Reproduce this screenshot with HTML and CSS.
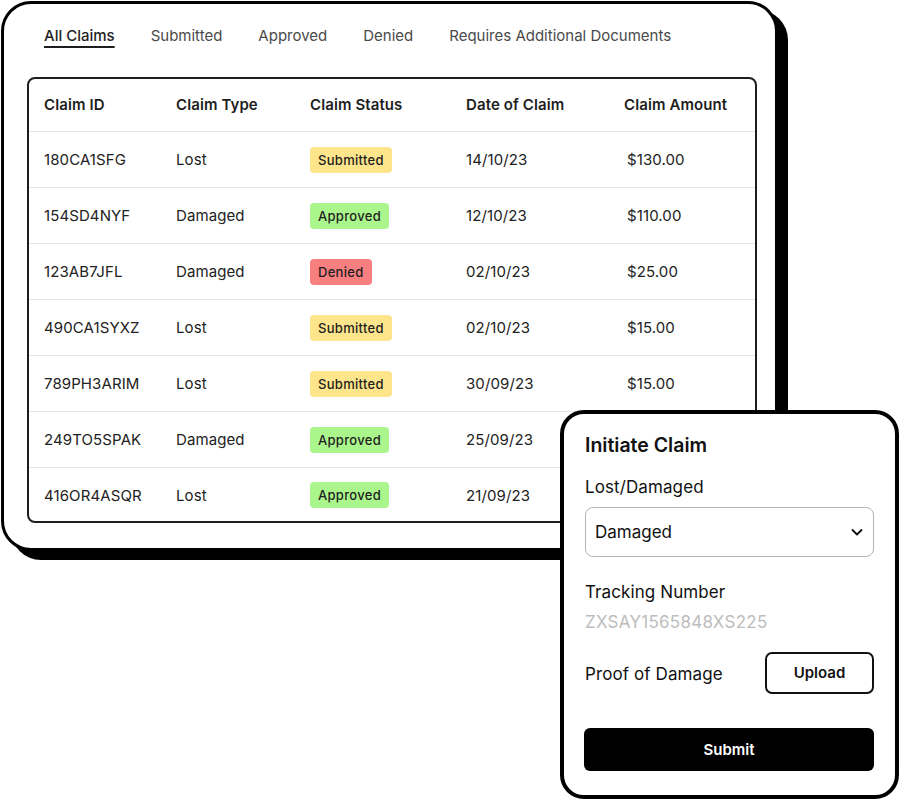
FILE: index.html
```html
<!DOCTYPE html>
<html>
<head>
<meta charset="utf-8">
<link rel="stylesheet" href="styles.css">
</head>
<body>
<div class="page">
  <section class="card">
    <nav class="tabs">
      <span class="tab active">All Claims</span>
      <span class="tab">Submitted</span>
      <span class="tab">Approved</span>
      <span class="tab">Denied</span>
      <span class="tab">Requires Additional Documents</span>
    </nav>
    <div class="table">
      <div class="row head">
        <div>Claim ID</div><div>Claim Type</div><div>Claim Status</div><div>Date of Claim</div><div>Claim Amount</div>
      </div>
      <div class="row">
        <div>180CA1SFG</div><div>Lost</div><div><span class="badge sub">Submitted</span></div><div>14/10/23</div><div class="amt">$130.00</div>
      </div>
      <div class="row">
        <div>154SD4NYF</div><div>Damaged</div><div><span class="badge ok">Approved</span></div><div>12/10/23</div><div class="amt">$110.00</div>
      </div>
      <div class="row">
        <div>123AB7JFL</div><div>Damaged</div><div><span class="badge no">Denied</span></div><div>02/10/23</div><div class="amt">$25.00</div>
      </div>
      <div class="row">
        <div>490CA1SYXZ</div><div>Lost</div><div><span class="badge sub">Submitted</span></div><div>02/10/23</div><div class="amt">$15.00</div>
      </div>
      <div class="row">
        <div>789PH3ARIM</div><div>Lost</div><div><span class="badge sub">Submitted</span></div><div>30/09/23</div><div class="amt">$15.00</div>
      </div>
      <div class="row">
        <div>249TO5SPAK</div><div>Damaged</div><div><span class="badge ok">Approved</span></div><div>25/09/23</div><div class="amt">$15.00</div>
      </div>
      <div class="row last">
        <div>416OR4ASQR</div><div>Lost</div><div><span class="badge ok">Approved</span></div><div>21/09/23</div><div class="amt">$15.00</div>
      </div>
    </div>
  </section>

  <section class="modal">
    <h2 class="m-title">Initiate Claim</h2>
    <div class="m-label">Lost/Damaged</div>
    <div class="select">
      <span>Damaged</span>
      <svg width="14" height="14" viewBox="0 0 14 14"><path d="M2.5 5 L7 9.5 L11.5 5" fill="none" stroke="#111" stroke-width="1.8" stroke-linecap="round" stroke-linejoin="round"/></svg>
    </div>
    <div class="m-label track-label">Tracking Number</div>
    <div class="track-val">ZXSAY1565848XS225</div>
    <div class="proof">
      <span class="m-label">Proof of Damage</span>
      <span class="upload">Upload</span>
    </div>
    <div class="submit">Submit</div>
  </section>
</div>
</body>
</html>
```
FILE: styles.css
```css
* { box-sizing: border-box; }
html, body { margin: 0; padding: 0; background: #fff; }
body { font-family: Inter, "Noto Sans", sans-serif; color: #1e1e1e; }
.page { position: relative; width: 900px; height: 800px; padding: 1px 0 0 1px; }

.card {
  width: 777px;
  height: 550px;
  border: 3px solid #000;
  border-radius: 30px;
  box-shadow: 10px 9px 0 #000;
  background: #fff;
  padding: 22px 20px 0 23px;
}
.tabs { display: flex; gap: 36px; padding-left: 17px; height: 20px; align-items: center; }
.tab { font-size: 15px; color: #4a4a4a; line-height: 20px; white-space: nowrap; }
.tab.active { color: #1e1e1e; font-weight: 500; text-decoration: underline; text-decoration-thickness: 1.5px; text-underline-offset: 5px; }

.table {
  margin-top: 31px;
  width: 730px;
  border: 2px solid #1e1e1e;
  border-radius: 8px;
  overflow: hidden;
}
.row {
  display: grid;
  grid-template-columns: 132px 134px 156px 158px 1fr;
  padding-left: 15px;
  height: 56px;
  align-items: center;
  border-top: 1px solid #e6e6e6;
  font-size: 15px;
  color: #222;
  letter-spacing: 0.1px;
}
.row.head { border-top: none; height: 52px; font-weight: 600; color: #1e1e1e; padding-bottom: 1px; }
.row.last { height: 54px; padding-top: 1px; }
.amt { padding-left: 3px; }
.badge {
  display: inline-block;
  font-size: 13px;
  font-weight: 500;
  line-height: 18px;
  padding: 4px 8px;
  border-radius: 4px;
  color: #1e1e1e;
  letter-spacing: 0.3px;
}
.badge.sub { background: #fde58c; }
.badge.ok { background: #aaf68c; }
.badge.no { background: #f87f7f; }

.modal {
  position: absolute;
  left: 560px;
  top: 410px;
  width: 339px;
  height: 389px;
  border: 4px solid #000;
  border-radius: 24px;
  background: #fff;
  padding: 19px 21px 0 21px;
  display: flex;
  flex-direction: column;
}
.m-title { margin: 0; font-size: 19.5px; font-weight: 600; line-height: 24px; color: #111; }
.m-label { font-size: 17px; line-height: 22px; color: #111; margin-top: 19px; letter-spacing: 0.1px; }
.select {
  margin-top: 9px;
  height: 50px;
  border: 1px solid #b5b5b5;
  border-radius: 8px;
  display: flex;
  align-items: center;
  justify-content: space-between;
  padding: 0 9px 0 9px;
  font-size: 17px;
  color: #111;
}
.track-label { margin-top: 24px; }
.track-val { margin-top: 8px; font-size: 17px; line-height: 22px; color: #bdbdbd; letter-spacing: 0.25px; }
.proof { margin-top: 19px; display: flex; justify-content: space-between; align-items: center; height: 41px; }
.proof .m-label { margin-top: 3px; }
.upload {
  width: 109px;
  height: 42px;
  border: 2px solid #111;
  border-radius: 7px;
  display: flex;
  align-items: center;
  justify-content: center;
  font-size: 15px;
  font-weight: 600;
  color: #111;
}
.submit {
  margin-top: 35px;
  height: 43px;
  background: #000;
  color: #fff;
  border-radius: 6px;
  display: flex;
  align-items: center;
  justify-content: center;
  font-size: 15px;
  font-weight: 600;
  margin-left: -1px;
}
```
